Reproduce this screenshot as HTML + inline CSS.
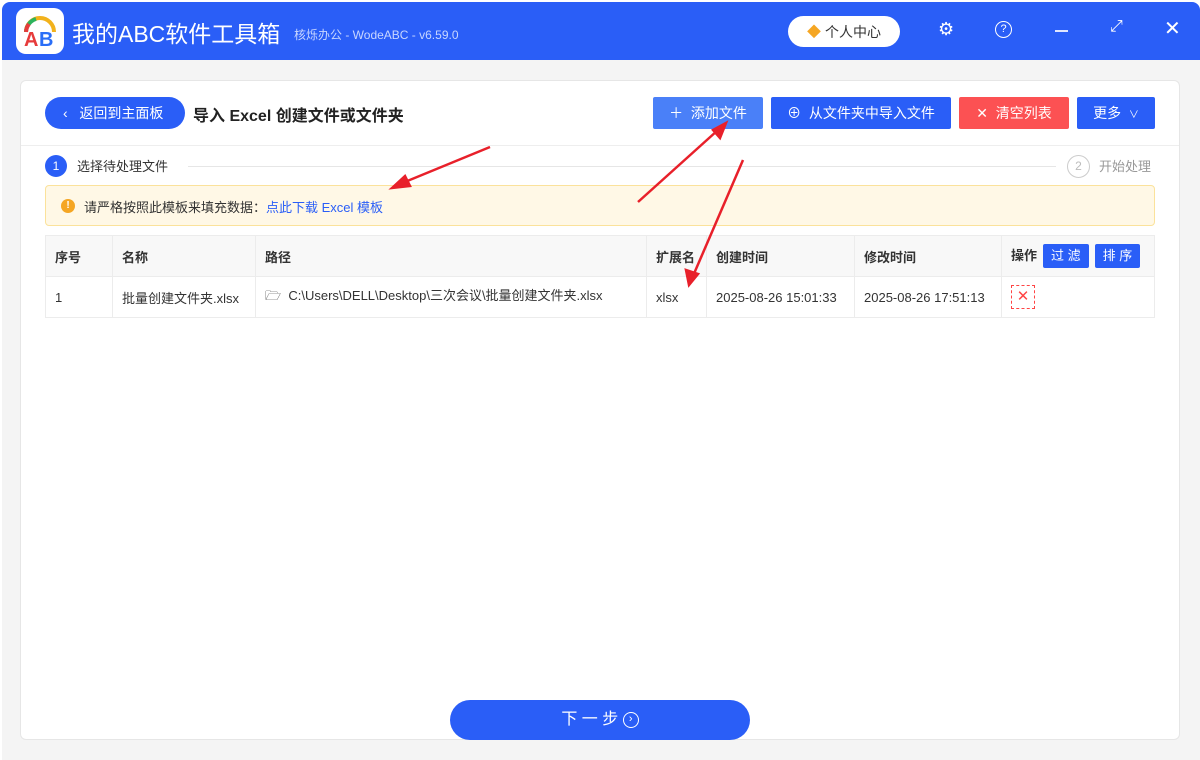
<!DOCTYPE html>
<html><head><meta charset="utf-8"><style>
*{box-sizing:border-box;margin:0;padding:0}
body{width:1200px;height:760px;background:#fff;font-family:"Liberation Sans","Noto Sans CJK SC",sans-serif;position:relative;overflow:hidden;font-size:13px;color:#333}
.hdr{position:absolute;left:2px;top:2px;width:1198px;height:58px;background:#2a5ef7;border-radius:8px 8px 0 0}
.body{position:absolute;left:2px;top:60px;width:1198px;height:700px;background:#f4f4f4}
.panel{position:absolute;left:20px;top:80px;width:1160px;height:660px;background:#fff;border:1px solid #e6e6e6;border-radius:6px}
.abs{position:absolute}
.btn{position:absolute;height:32px;top:97px;color:#fff;font-size:14px;display:flex;align-items:center;justify-content:center;border-radius:2px}
table{border-collapse:collapse;position:absolute;left:45px;top:235px;width:1110px}
td,th{border:1px solid #ececec;height:41px;padding-left:9px;text-align:left;font-size:13px}
th{background:#f8f8f8;font-weight:bold;color:#333}
.sm{display:inline-block;background:#2a5ef7;color:#fff;padding:0 8px;height:24px;line-height:24px;border-radius:2px;font-weight:normal;margin-left:6px}
</style></head><body>
<div class="hdr"></div>
<div class="abs" style="left:16px;top:8px;width:48px;height:46px;background:#fff;border-radius:10px">
<svg width="48" height="46" viewBox="0 0 48 46"><path d="M10 24 A14 14 0 0 1 38 24" stroke="#f2b21c" stroke-width="4" fill="none"/><path d="M10 24 A14 14 0 0 1 20 11" stroke="#2db35c" stroke-width="4" fill="none"/><path d="M10 24 A14 14 0 0 1 13 16" stroke="#e63b3b" stroke-width="4" fill="none"/><text x="8" y="38" font-size="20" font-weight="bold" fill="#e63b3b" font-family="Liberation Sans">A</text><text x="23" y="38" font-size="20" font-weight="bold" fill="#2a6ef7" font-family="Liberation Sans">B</text></svg></div>
<div class="abs" style="left:72px;top:15px;color:#fff;font-size:23px">我的ABC软件工具箱</div>
<div class="abs" style="left:294px;top:26px;color:#c8d6ff;font-size:12px">核烁办公 - WodeABC - v6.59.0</div>
<div class="abs" style="left:788px;top:16px;width:112px;height:31px;background:#fff;border-radius:16px;font-size:14px;color:#333;display:flex;align-items:center;justify-content:center"><span style="color:#f5a623;margin-right:4px">◆</span>个人中心</div>
<div class="abs" style="left:938px;top:19px;color:#fff;font-size:18px">⚙</div>
<div class="abs" style="left:995px;top:21px;width:17px;height:17px;border:1.5px solid #fff;border-radius:50%;color:#fff;font-size:11px;text-align:center;line-height:14px">?</div>
<div class="abs" style="left:1055px;top:30px;width:13px;height:2px;background:#dfe6ff"></div>
<div class="abs" style="left:1110px;top:18px;color:#fff;font-size:16px">⤢</div>
<div class="abs" style="left:1164px;top:16px;color:#fff;font-size:20px">✕</div>
<div class="body"></div>
<div class="panel"></div>
<div class="abs" style="left:45px;top:97px;width:140px;height:32px;background:#2a5ef7;border-radius:16px;color:#fff;font-size:14px;line-height:32px;padding-left:18px">‹&nbsp;&nbsp; 返回到主面板</div>
<div class="abs" style="left:193px;top:102px;font-size:16px;font-weight:bold;color:#222">导入 Excel 创建文件或文件夹</div>
<div class="btn" style="left:653px;width:110px;background:#4a80f8">＋&nbsp; 添加文件</div>
<div class="btn" style="left:771px;width:180px;background:#2a5ef7">⊕&nbsp; 从文件夹中导入文件</div>
<div class="btn" style="left:959px;width:110px;background:#fc5153">✕&nbsp; 清空列表</div>
<div class="btn" style="left:1077px;width:78px;background:#2a5ef7">更多 &nbsp;<span style="font-size:10px">∨</span></div>
<div class="abs" style="left:21px;top:145px;width:1158px;height:1px;background:#eee"></div>
<div class="abs" style="left:45px;top:155px;width:22px;height:22px;border-radius:50%;background:#2a5ef7;color:#fff;text-align:center;line-height:22px;font-size:12px">1</div>
<div class="abs" style="left:77px;top:156px">选择待处理文件</div>
<div class="abs" style="left:188px;top:166px;width:868px;height:1px;background:#e6e6e6"></div>
<div class="abs" style="left:1067px;top:155px;width:23px;height:23px;border-radius:50%;border:1px solid #ccc;color:#bbb;text-align:center;line-height:21px;font-size:12px">2</div>
<div class="abs" style="left:1099px;top:156px;color:#999">开始处理</div>
<div class="abs" style="left:45px;top:185px;width:1110px;height:41px;background:#fff8e6;border:1px solid #fbe29b;border-radius:4px"></div>
<div class="abs" style="left:61px;top:199px;width:14px;height:14px;border-radius:50%;background:#f5a623;color:#fff;font-size:10px;text-align:center;line-height:14px;font-weight:bold">!</div>
<div class="abs" style="left:84px;top:197px">请严格按照此模板来填充数据：<span style="color:#2a5ef7">点此下载 Excel 模板</span></div>
<table>
<tr><th style="width:67px">序号</th><th style="width:143px">名称</th><th style="width:391px">路径</th><th style="width:60px">扩展名</th><th style="width:148px">创建时间</th><th style="width:147px">修改时间</th><th>操作<span class="sm">过 滤</span><span class="sm">排 序</span></th></tr>
<tr><td>1</td><td>批量创建文件夹.xlsx</td><td>🗁 &nbsp;C:\Users\DELL\Desktop\三次会议\批量创建文件夹.xlsx</td><td>xlsx</td><td>2025-08-26 15:01:33</td><td>2025-08-26 17:51:13</td><td><span style="display:inline-block;width:24px;height:24px;border:1px dashed #f44;color:#f44;text-align:center;line-height:22px;font-size:15px">✕</span></td></tr>
</table>
<svg class="abs" style="left:0;top:0" width="1200" height="760">
<g stroke="#e8202a" stroke-width="2.5" fill="#e8202a">
<line x1="490" y1="147" x2="400" y2="184"/><polygon points="392,188 405,176 410,186"/>
<line x1="638" y1="202" x2="718" y2="130"/><polygon points="726,123 713,130 720,138"/>
<line x1="743" y1="160" x2="693" y2="276"/><polygon points="689,285 686,270 698,274"/>
</g></svg>
<div class="abs" style="left:450px;top:700px;width:300px;height:40px;background:#2a5ef7;border-radius:20px;color:#fff;font-size:16px;text-align:center;line-height:40px">下 一 步 <span style="display:inline-block;width:16px;height:16px;border:1.5px solid #fff;border-radius:50%;font-size:11px;line-height:13px;vertical-align:middle">›</span></div>
</body></html>
